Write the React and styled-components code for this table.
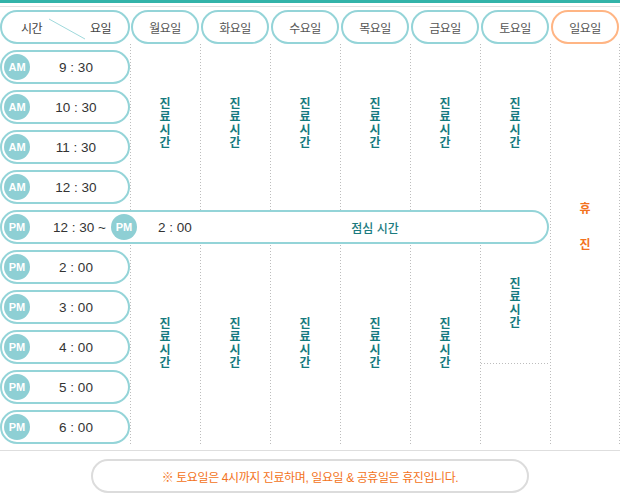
import React from "react";
import styled, { createGlobalStyle } from "styled-components";

// clinic opening hours board: one row per time slot, one column per weekday
const GlobalStyle = createGlobalStyle`
  html, body {
    margin: 0;
    padding: 0;
    background: #fff;
  }
  body {
    font-family: "Liberation Sans", "Noto Sans CJK KR", sans-serif;
  }
`;

const days = ["월요일", "화요일", "수요일", "목요일", "금요일", "토요일", "일요일"];

const morning = [
  { tag: "AM", time: "9 : 30" },
  { tag: "AM", time: "10 : 30" },
  { tag: "AM", time: "11 : 30" },
  { tag: "AM", time: "12 : 30" },
];

const afternoon = [
  { tag: "PM", time: "2 : 00" },
  { tag: "PM", time: "3 : 00" },
  { tag: "PM", time: "4 : 00" },
  { tag: "PM", time: "5 : 00" },
  { tag: "PM", time: "6 : 00" },
];

const Page = styled.div`
  width: 620px;
  border-top: 3px solid #33b3a9;
`;

const TopRule = styled.div`
  margin-top: 3px;
  height: 1px;
  background: #e3e3e3;
`;

const Board = styled.div`
  display: grid;
  grid-template-columns: 130px repeat(7, 70px);
  grid-template-rows: 37px repeat(10, 40px);
`;

const Pill = styled.div`
  box-sizing: border-box;
  height: 34px;
  align-self: end;
  border: 2px solid ${(p) => (p.$tone === "orange" ? "#ffb584" : "#94d4d8")};
  border-radius: 17px;
  background: #fff;
`;

const HeadPill = styled(Pill)`
  grid-row: 1;
  margin: 0 1px;
  display: flex;
  align-items: center;
  justify-content: center;
  font-size: 12px;
  color: #555;
  letter-spacing: -0.5px;
`;

const CornerPill = styled(Pill)`
  grid-row: 1;
  grid-column: 1;
  position: relative;
  display: flex;
  align-items: center;
  justify-content: space-between;
  padding: 0 17px 0 19px;
  font-size: 12px;
  color: #444;
  letter-spacing: -0.5px;
`;

const Slash = styled.svg`
  position: absolute;
  left: 45px;
  top: 5px;
`;

const TimePill = styled(Pill)`
  grid-column: 1;
  grid-row: ${(p) => p.$row};
  display: flex;
  align-items: center;
  padding: 0 2px;
`;

const Badge = styled.span`
  flex: none;
  width: 26px;
  height: 26px;
  border-radius: 50%;
  background: #8ecfd4;
  color: #fff;
  font-size: 11px;
  font-weight: 700;
  display: flex;
  align-items: center;
  justify-content: center;
  margin-left: ${(p) => p.$gap || 0}px;
`;

const TimeText = styled.span`
  flex: 1;
  text-align: center;
  padding-right: 4px;
  font-size: 13.5px;
  color: #333;
`;

const LunchPill = styled(Pill)`
  grid-column: 1 / 8;
  grid-row: 6;
  margin-right: 1px;
  z-index: 1;
  display: grid;
  grid-template-columns: 196px 1fr;
  align-items: center;
  padding: 0 2px;
`;

const LunchTimes = styled.div`
  display: flex;
  align-items: center;
`;

const LunchTime = styled.span`
  margin-left: ${(p) => p.$gap}px;
  font-size: 13.5px;
  color: #333;
  white-space: nowrap;
`;

const LunchLabel = styled.span`
  text-align: center;
  padding-left: 5px;
  font-size: 12px;
  font-weight: 500;
  color: #1b7b7f;
`;

const ColumnRule = styled.div`
  grid-column: ${(p) => p.$col};
  grid-row: 2 / 12;
  background-image: linear-gradient(to bottom, #bdbdbd 1px, transparent 1px)
    ${(p) => (p.$last ? ", linear-gradient(to bottom, #bdbdbd 1px, transparent 1px)" : "")};
  background-size: 1px 3px${(p) => (p.$last ? ", 1px 3px" : "")};
  background-position: left top${(p) => (p.$last ? ", right top" : "")};
  background-repeat: repeat-y;
`;

const Cell = styled.div`
  grid-column: ${(p) => p.$col};
  grid-row: ${(p) => p.$rows};
  display: flex;
  align-items: center;
  justify-content: center;
  ${(p) =>
    p.$ruled &&
    `
    background-image: linear-gradient(to right, #bdbdbd 1px, transparent 1px);
    background-size: 3px 1px;
    background-position: 1px bottom;
    background-repeat: repeat-x;
  `}
`;

const VText = styled.span`
  display: block;
  width: 12px;
  word-break: break-all;
  text-align: center;
  font-size: 12px;
  line-height: 13px;
  font-weight: 700;
  color: #167a7e;
`;

const ClosedCell = styled(Cell)`
  flex-direction: column;
  padding-bottom: 34px;
`;

const ClosedChar = styled.span`
  font-size: 12px;
  line-height: 36px;
  font-weight: 700;
  color: #f37321;
`;

const Footer = styled.div`
  margin-top: 6px;
  border-top: 1px solid #dedede;
  padding-top: 8px;
`;

const NotePill = styled.div`
  box-sizing: border-box;
  width: 438px;
  height: 34px;
  margin: 0 auto;
  border: 2px solid #dcdcdc;
  border-radius: 17px;
  display: flex;
  align-items: center;
  justify-content: center;
  font-size: 12px;
  color: #f37321;
  letter-spacing: -0.4px;
`;

function App() {
  return (
    <Page>
      <GlobalStyle />
      <TopRule />
      <Board>
        <CornerPill>
          <span>시간</span>
          <Slash width="40" height="24" viewBox="0 0 40 24">
            <line x1="2" y1="2" x2="38" y2="22" stroke="#9fd9dc" strokeWidth="1" />
          </Slash>
          <span>요일</span>
        </CornerPill>
        {days.map((d, i) => (
          <HeadPill key={d} style={{ gridColumn: i + 2 }} $tone={i === 6 ? "orange" : "teal"}>
            {d}
          </HeadPill>
        ))}

        {days.map((d, i) => (
          <ColumnRule key={d} $col={i + 2} $last={i === 6} />
        ))}

        {morning.map((m, i) => (
          <TimePill key={m.time} $row={i + 2}>
            <Badge>{m.tag}</Badge>
            <TimeText>{m.time}</TimeText>
          </TimePill>
        ))}

        <LunchPill>
          <LunchTimes>
            <Badge>PM</Badge>
            <LunchTime $gap={23}>12 : 30 ~</LunchTime>
            <Badge $gap={5}>PM</Badge>
            <LunchTime $gap={21}>2 : 00</LunchTime>
          </LunchTimes>
          <LunchLabel>점심 시간</LunchLabel>
        </LunchPill>

        {afternoon.map((m, i) => (
          <TimePill key={m.time} $row={i + 7}>
            <Badge>{m.tag}</Badge>
            <TimeText>{m.time}</TimeText>
          </TimePill>
        ))}

        {[2, 3, 4, 5, 6, 7].map((c) => (
          <Cell key={"am" + c} $col={c} $rows="2 / 6">
            <VText>진료시간</VText>
          </Cell>
        ))}
        {[2, 3, 4, 5, 6].map((c) => (
          <Cell key={"pm" + c} $col={c} $rows="7 / 12">
            <VText>진료시간</VText>
          </Cell>
        ))}
        <Cell $col={7} $rows="7 / 10" $ruled>
          <VText>진료시간</VText>
        </Cell>
        <ClosedCell $col={8} $rows="2 / 12">
          <ClosedChar>휴</ClosedChar>
          <ClosedChar>진</ClosedChar>
        </ClosedCell>
      </Board>
      <Footer>
        <NotePill>※ 토요일은 4시까지 진료하며, 일요일 &amp; 공휴일은 휴진입니다.</NotePill>
      </Footer>
    </Page>
  );
}

export default App;
